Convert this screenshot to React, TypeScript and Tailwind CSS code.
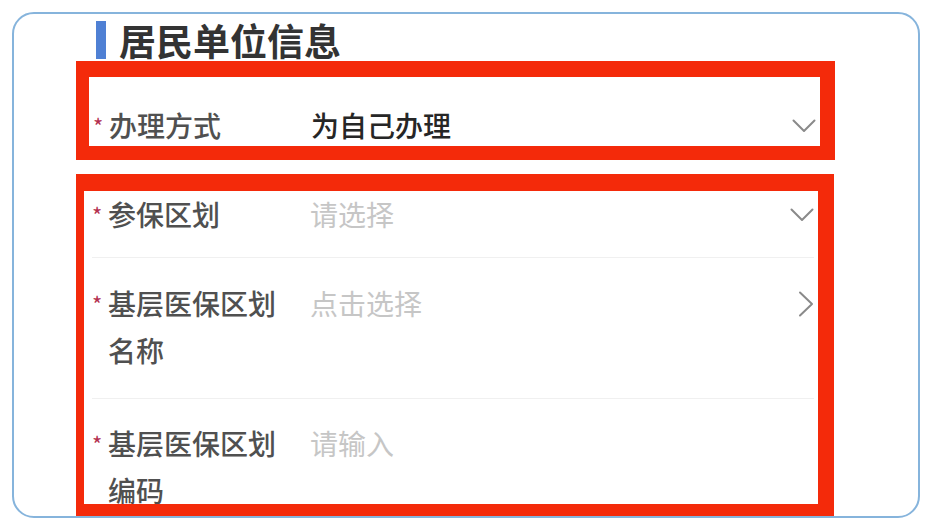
const FONT = "font-['Noto_Sans_CJK_SC','Noto_Sans',sans-serif]"

function ChevronDown() {
  return (
    <svg width="24" height="14" viewBox="0 0 24 14" fill="none">
      <polyline points="1.5,1.5 12,12 22.5,1.5" stroke="#8a8a8a" strokeWidth="2" strokeLinecap="round" strokeLinejoin="round" />
    </svg>
  )
}

function ChevronRight() {
  return (
    <svg width="16" height="26" viewBox="0 0 16 26" fill="none">
      <polyline points="2,1.5 14,13 2,24.5" stroke="#8a8a8a" strokeWidth="2" strokeLinecap="round" strokeLinejoin="round" />
    </svg>
  )
}

type RowProps = {
  label: string
  value: string
  placeholder?: boolean
  icon?: 'down' | 'right'
  className?: string
}

function Row({ label, value, placeholder, icon, className }: RowProps) {
  return (
    <div className={`flex items-start ${className ?? ''}`}>
      <div className="flex w-[218px] shrink-0">
        <span className="w-[16px] shrink-0 pt-[12px] text-[22px] leading-none text-[#b3304f]">*</span>
        <span className="w-[172px] text-[28px] font-medium leading-[47px] text-[#505050]">{label}</span>
      </div>
      <div className={`flex-1 text-[28px] leading-[47px] ${placeholder ? 'font-normal text-[#c6c6c6]' : 'font-medium text-[#262626]'}`}>
        {value}
      </div>
      {icon && (
        <div className="flex h-[47px] w-[30px] items-center justify-end">
          {icon === 'down' ? <ChevronDown /> : <ChevronRight />}
        </div>
      )}
    </div>
  )
}

export default function App() {
  return (
    <div className={`h-[531px] w-[933px] bg-white pl-[12px] pt-[12px] ${FONT}`}>
      <div className="h-[506px] w-[908px] overflow-hidden rounded-[22px] border-2 border-[#86b4dc] bg-white pl-[62px] pt-[4px]">
        {/* Title */}
        <div className="flex h-[43px] items-center gap-[13px] pl-[20px]">
          <div className="h-[38px] w-[10px] bg-[#4f80d4]" />
          <h2 className="text-[37px] font-bold leading-[40px] text-[#333]">居民单位信息</h2>
        </div>

        {/* Box 1 */}
        <div className="h-[99px] w-[759px] border-t-[16px] border-r-[15px] border-b-[14px] border-l-[13px] border-[#f42a0a] pl-[4px] pr-[4px] pt-[25px]">
          <Row label="办理方式" value="为自己办理" icon="down" />
        </div>

        {/* Box 2 */}
        <div className="mt-[14px] h-[342px] w-[758px] overflow-hidden border-t-[17px] border-r-[16px] border-b-[12px] border-l-[8px] border-[#f42a0a]">
          <div className="h-full overflow-hidden pr-[4px]">
            <div className="ml-[8px] border-b border-[#f0f0f0] pb-[19px]">
              <Row label="参保区划" value="请选择" placeholder icon="down" />
            </div>
            <div className="ml-[8px] border-b border-[#f0f0f0] pb-[24px] pt-[22px]">
              <Row label="基层医保区划名称" value="点击选择" placeholder icon="right" />
            </div>
            <div className="ml-[8px] pt-[21px]">
              <Row label="基层医保区划编码" value="请输入" placeholder />
            </div>
          </div>
        </div>
      </div>
    </div>
  )
}
